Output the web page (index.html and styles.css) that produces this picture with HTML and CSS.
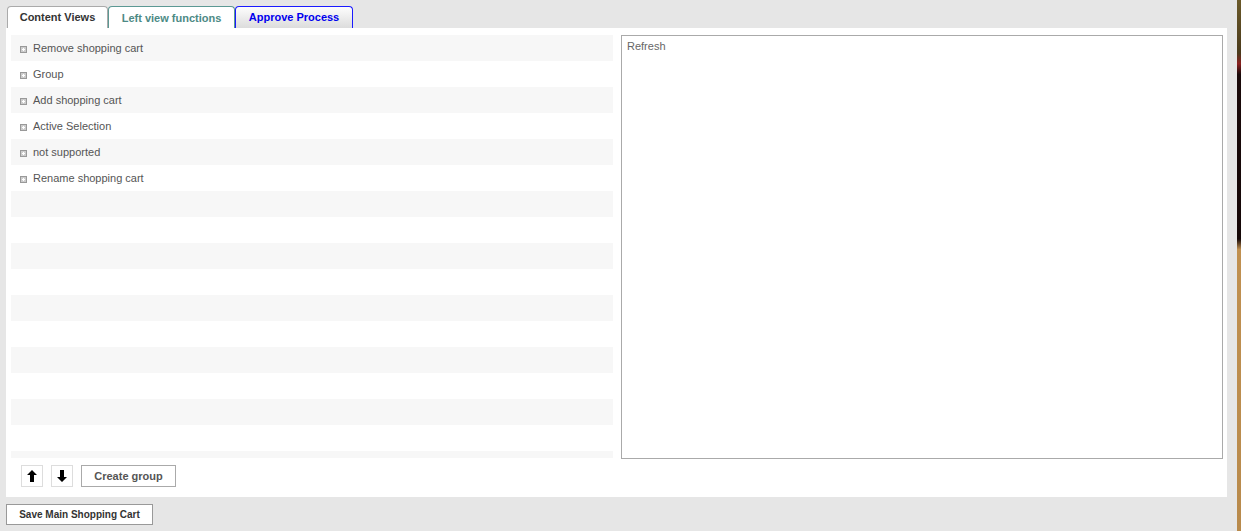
FILE: index.html
```html
<!DOCTYPE html>
<html lang="en">
<head>
    <meta charset="UTF-8">
    <title>Shopping Cart Functions</title>
    <link rel="stylesheet" href="styles.css">
</head>
<body>
    <div class="page">
        <div class="tabs">
            <div class="tab tab-content">Content Views</div>
            <div class="tab tab-left">Left view functions</div>
            <div class="tab tab-approve">Approve Process</div>
        </div>

        <div class="panel">
            <div class="columns">
                <div class="left-col">
                    <ul class="func-list">
                        <li><span class="plus"></span>Remove shopping cart</li>
                        <li><span class="plus"></span>Group</li>
                        <li><span class="plus"></span>Add shopping cart</li>
                        <li><span class="plus"></span>Active Selection</li>
                        <li><span class="plus"></span>not supported</li>
                        <li><span class="plus"></span>Rename shopping cart</li>
                        <li></li><li></li><li></li><li></li><li></li>
                        <li></li><li></li><li></li><li></li><li></li><li></li>
                    </ul>
                </div>
                <div class="right-col">
                    <div class="preview">Refresh</div>
                </div>
            </div>

            <div class="toolbar">
                <button class="btn btn-icon" title="Move up">
                    <svg width="10" height="12" viewBox="0 0 10 12"><path d="M5 0 L10 5 L7 5 L7 12 L3 12 L3 5 L0 5 Z" fill="#000"/></svg>
                </button>
                <button class="btn btn-icon" title="Move down">
                    <svg width="10" height="12" viewBox="0 0 10 12"><path d="M3 0 L7 0 L7 7 L10 7 L5 12 L0 7 L3 7 Z" fill="#000"/></svg>
                </button>
                <button class="btn btn-text">Create group</button>
            </div>
        </div>

        <button class="btn btn-save">Save Main Shopping Cart</button>
    </div>
    <div class="edge"></div>
</body>
</html>
```

FILE: styles.css
```css
body {
    margin: 0;
    padding: 0;
    height: 531px;
    background: #e6e6e6;
    font-family: 'Liberation Sans', Arial, sans-serif;
    font-size: 11px;
    color: #555;
    display: flex;
    overflow: hidden;
}

.page {
    flex: 1;
    padding: 6px 0 0 6px;
    margin-right: 10px;
}

.tabs {
    display: flex;
    height: 22px;
    padding-left: 1px;
}

.tab {
    box-sizing: border-box;
    height: 22px;
    padding-top: 4px;
    font-weight: bold;
    font-size: 11px;
    text-align: center;
    border: 1px solid #aaa;
    border-bottom: none;
    border-radius: 4px 4px 0 0;
    background: #fff;
}

.tab-content {
    width: 101px;
    color: #333;
}

.tab-left {
    width: 127px;
    color: #4d8a85;
    border-color: #5b9893;
    padding-top: 5px;
}

.tab-approve {
    width: 118px;
    color: #0000ee;
    border-color: #1a1aff;
    background: linear-gradient(#fdfdfd, #dcdcdc);
}

.panel {
    background: #fff;
    height: 469px;
    box-sizing: border-box;
    padding: 7px 4px 0 5px;
    display: flex;
    flex-direction: column;
}

.columns {
    display: flex;
    gap: 8px;
    height: 424px;
}

.left-col {
    width: 602px;
    height: 423px;
    overflow: hidden;
}

.func-list {
    list-style: none;
    margin: 0;
    padding: 0;
}

.func-list li {
    height: 26px;
    line-height: 26px;
    padding-left: 9px;
    display: flex;
    align-items: center;
}

.func-list li:nth-child(odd) {
    background: #f7f7f7;
}

.plus {
    width: 5px;
    height: 5px;
    border: 1px solid #999;
    background: #ccc;
    margin-right: 6px;
    margin-top: 2px;
    position: relative;
}

.plus::before,
.plus::after {
    content: '';
    position: absolute;
    background: #fff;
}

.plus::before {
    left: 1px;
    top: 2px;
    width: 3px;
    height: 1px;
}

.plus::after {
    left: 2px;
    top: 1px;
    width: 1px;
    height: 3px;
}

.right-col {
    flex: 1;
}

.preview {
    box-sizing: border-box;
    height: 424px;
    border: 1px solid #aaa;
    padding: 4px 5px;
    color: #666;
}

.toolbar {
    display: flex;
    gap: 8px;
    padding: 6px 0 0 10px;
}

.btn {
    box-sizing: border-box;
    height: 22px;
    background: #fff;
    border: 1px solid #bbb;
    font-family: 'Liberation Sans', Arial, sans-serif;
    font-weight: bold;
    font-size: 11px;
    color: #555;
    cursor: pointer;
    padding: 0;
}

.btn-icon {
    width: 22px;
    border-color: #ddd;
    display: flex;
    align-items: center;
    justify-content: center;
}

.btn-text {
    width: 95px;
    border-color: #aaa;
}

.btn-save {
    display: block;
    margin-top: 7px;
    width: 147px;
    height: 21px;
    border-color: #999;
    color: #333;
    font-size: 10px;
}

.edge {
    width: 4px;
    background: linear-gradient(#6b5a2a 0%, #4a3a1c 10%, #8a2020 12%, #1a0a0a 14%, #150808 45%, #c09050 47%, #b88a4c 100%);
}
```
